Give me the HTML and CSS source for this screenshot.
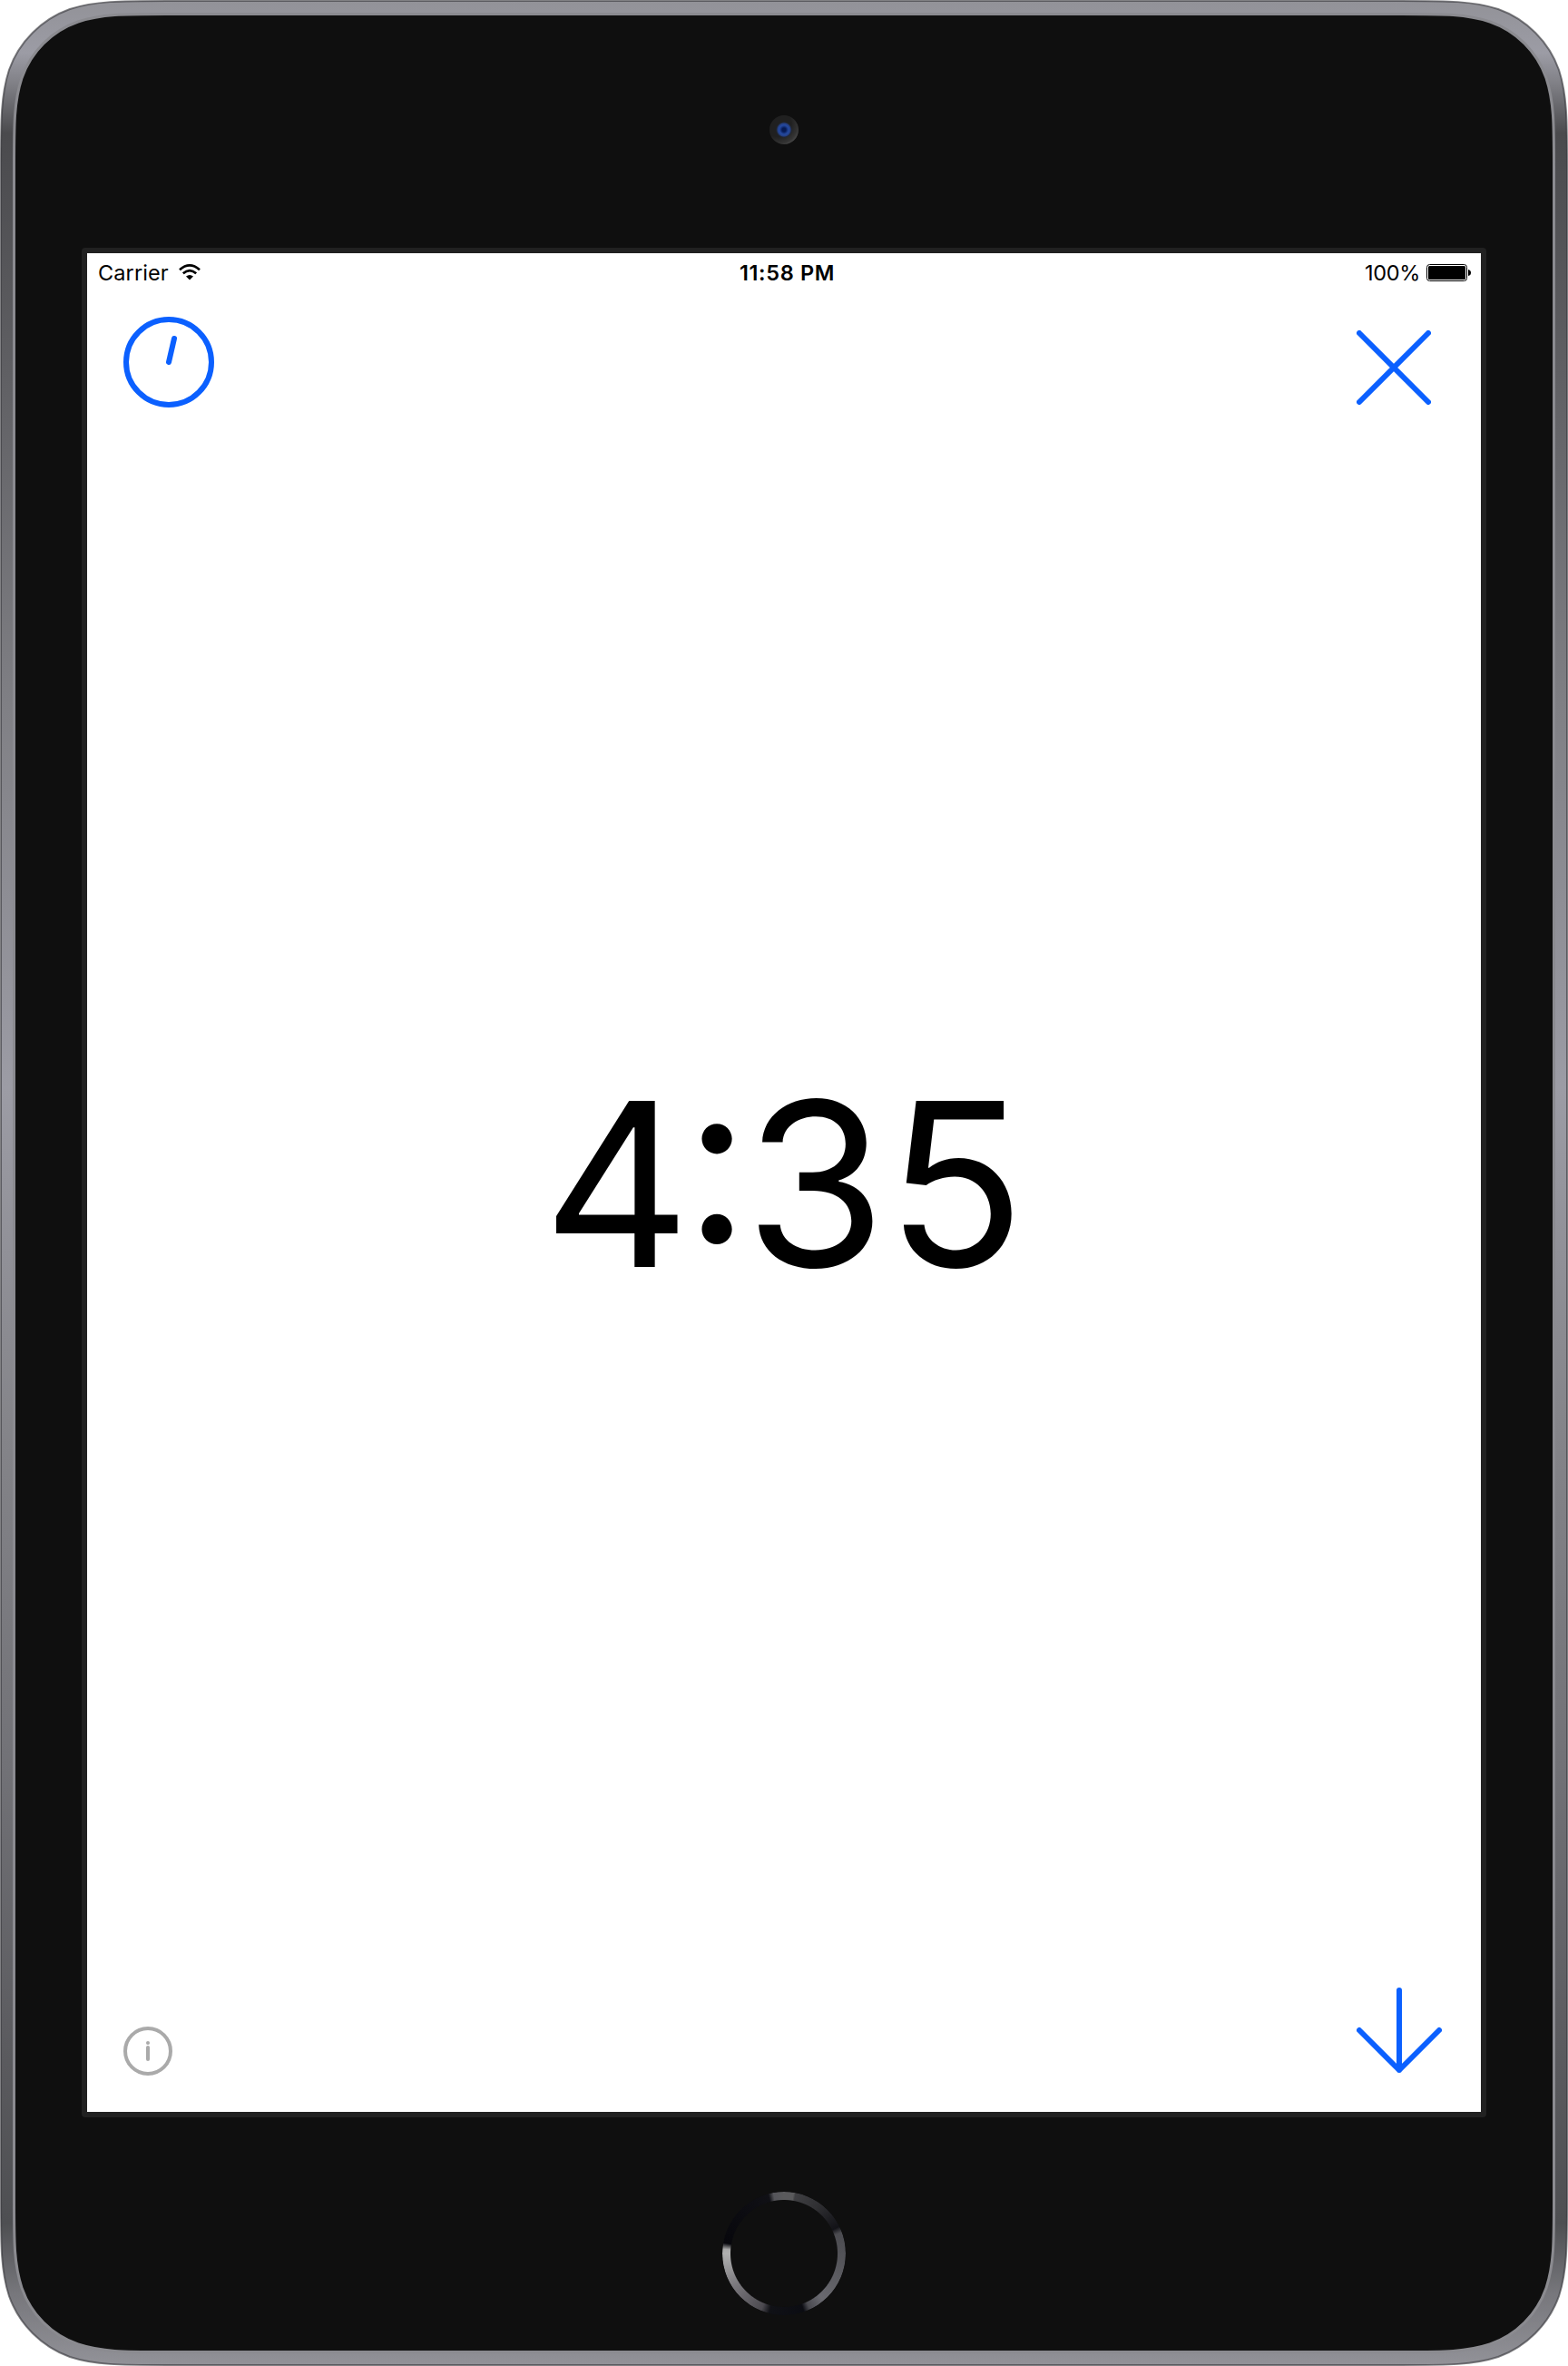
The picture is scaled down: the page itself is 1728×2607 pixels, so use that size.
FILE: index.html
```html
<!DOCTYPE html>
<html lang="en">
<head>
<meta charset="utf-8">
<title>Timer</title>
<link rel="stylesheet" href="styles.css">
</head>
<body>
<div class="device">
  <svg class="shell" viewBox="0 0 1728 2607" aria-hidden="true">
    <defs>
      <linearGradient id="metal" x1="0" y1="0" x2="0" y2="1">
        <stop offset="0" stop-color="#929298"/>
        <stop offset="0.022" stop-color="#9c9ca5"/>
        <stop offset="0.035" stop-color="#808086"/>
        <stop offset="0.056" stop-color="#4a4a4d"/>
        <stop offset="0.16" stop-color="#606064"/>
        <stop offset="0.3" stop-color="#808085"/>
        <stop offset="0.46" stop-color="#9c9ca5"/>
        <stop offset="0.6" stop-color="#85858a"/>
        <stop offset="0.75" stop-color="#717176"/>
        <stop offset="0.86" stop-color="#5c5c60"/>
        <stop offset="0.94" stop-color="#4e4f52"/>
        <stop offset="0.97" stop-color="#77777c"/>
        <stop offset="1" stop-color="#929298"/>
      </linearGradient>
    </defs>
    <path fill="url(#metal)" stroke="#3c3c40" stroke-opacity=".65" stroke-width="2" d="M184 1H1544C1596 1 1623 1 1651 10C1682 21 1707 46 1718 77C1727 105 1727 132 1727 184V2423C1727 2475 1727 2502 1718 2530C1707 2561 1682 2586 1651 2597C1623 2606 1596 2606 1544 2606H184C132 2606 105 2606 77 2597C46 2586 21 2561 10 2530C1 2502 1 2475 1 2423V184C1 132 1 105 10 77C21 46 46 21 77 10C105 1 132 1 184 1Z"/>
    <path fill="#0f0f0f" stroke="#8b8b90" stroke-width="3" d="M183 15.500H1545C1592 15.500 1616 15.500 1642 24C1671 34 1694 57 1704 86C1712.500 112 1712.500 136 1712.500 183V2424C1712.500 2471 1712.500 2495 1704 2521C1694 2550 1671 2573 1642 2583C1616 2591.500 1592 2591.500 1545 2591.500H183C136 2591.500 112 2591.500 86 2583C57 2573 34 2550 24 2521C15.500 2495 15.500 2471 15.500 2424V183C15.500 136 15.500 112 24 86C34 57 57 34 86 24C112 15.500 136 15.500 183 15.500Z"/>
  </svg>
  <div class="forehead"><span class="camera"></span></div>
  <main class="screen">
    <header class="status">
      <div class="carrier"><span>Carrier</span>
        <svg class="wifi" viewBox="0 0 24 18"><g fill="none" stroke="#000" stroke-width="2.700"><path d="M1 6.200Q12 -3.300 23 6.200"/><path d="M4.800 10.300Q12 4 19.200 10.300"/></g><path d="M8 13.500Q12 10.500 16 13.500L12 17.500Z"/></svg>
      </div>
      <time class="clock">11:58 PM</time>
      <div class="power"><span>100%</span>
        <svg class="battery" viewBox="0 0 49 19"><rect x=".5" y=".5" width="44" height="18" rx="3" fill="#fff" stroke="#000"/><rect x="2" y="2" width="41" height="15" rx="1.500"/><path d="M46 6Q49 6.500 49 9.500T46 13Z"/></svg>
      </div>
    </header>
    <div class="row">
      <svg class="dial" viewBox="0 0 100 100"><circle cx="50" cy="50" r="47"/><path d="M50 50L56 24"/></svg>
      <svg class="close" viewBox="0 0 82 82"><path d="M3 3L79 79M79 3L3 79"/></svg>
    </div>
    <div class="countdown"><time><span class="hour">4</span><span class="colon">:</span>35</time></div>
    <div class="row bottom">
      <svg class="info" viewBox="0 0 54 54"><circle class="ring" cx="27" cy="27" r="25"/><circle cx="27" cy="18" r="2"/><path d="M27 23V36"/></svg>
      <svg class="down" viewBox="0 0 94 94"><path d="M47 3V91M3 47L47 91L91 47"/></svg>
    </div>
  </main>
  <div class="chin"><span class="home"></span></div>
</div>
</body>
</html>
```
FILE: styles.css
```css
body { margin: 0; background: #fff; font-family: Inter, "Liberation Sans", sans-serif; color: #000; }
.device { position: relative; isolation: isolate; width: 1728px; height: 2607px; display: flex; flex-direction: column; align-items: center; }
.shell { position: absolute; inset: 0; z-index: -1; width: 1728px; height: 2607px; }
svg { display: block; flex: none; }
.forehead { height: 273px; box-sizing: border-box; padding-top: 127px; }
.camera { display: block; width: 32px; height: 32px; border-radius: 50%; background: radial-gradient(circle at 50% 50%, #061a54 0 2px, #2449a0 5px, #253f83 7px, #202838 8px, transparent 9px), radial-gradient(circle at 28% 28%, #202020 45%, #343434 70%, #707070 100%); }
.screen { width: 1536px; height: 2048px; display: flex; flex-direction: column; background: #fff; border: 6px solid #212121; border-radius: 4px; }
.status { height: 40px; display: grid; grid-template-columns: 1fr auto 1fr; align-items: center; padding: 0 11px 0 12px; font-size: 23.500px; line-height: 40px; }
.status span, .clock { padding-top: 2px; }
.carrier, .power { display: flex; align-items: center; }
.carrier { gap: 11px; letter-spacing: .1px; }
.power { justify-content: flex-end; gap: 7px; letter-spacing: -.3px; }
.wifi { width: 24px; height: 18px; }
.battery { width: 49px; height: 19px; }
.clock { font-weight: 600; letter-spacing: .65px; padding-left: 6px; }
.row { display: flex; justify-content: space-between; align-items: flex-start; padding: 30px 55px 0 40px; }
.dial { width: 100px; height: 100px; }
.close { width: 82px; height: 82px; margin-top: 15px; }
.dial, .close, .down { fill: none; stroke: #0b60ff; stroke-width: 6; stroke-linecap: round; stroke-linejoin: round; }
.countdown { flex: 1; display: flex; align-items: center; justify-content: center; padding-bottom: 30px; font-size: 252px; line-height: 300px; font-feature-settings: "case" 1; }
.hour { letter-spacing: -7.500px; }
.colon { letter-spacing: -5.500px; }
.bottom { align-items: flex-end; padding: 0 43px 40px 40px; }
.info { width: 54px; height: 54px; fill: #aaa; stroke: #aaa; stroke-width: 4; stroke-linecap: round; }
.info circle { stroke: none; }
.info .ring { fill: none; stroke: #aaa; }
.down { width: 94px; height: 94px; margin-bottom: 3px; }
.chin { padding-top: 82px; }
.home { display: block; width: 136px; height: 136px; border-radius: 50%; background: conic-gradient(#5a5a5c 0 9deg, #3f3f42 11deg, #303033 35deg, #121217 64deg, #4b4b50 70deg, #56565b 100deg, #69696f 140deg, #4a4a50 155deg, #0b0c12 161deg, #101116 194deg, #4c4a50 202deg, #77757a 235deg, #b0b0b0 270deg, #aaa 274deg, #07070c 280deg, #101015 345deg, #55555a 350deg, #5a5a5c 360deg); mask: radial-gradient(circle, transparent 58.500px, #000 59.500px); }
```
